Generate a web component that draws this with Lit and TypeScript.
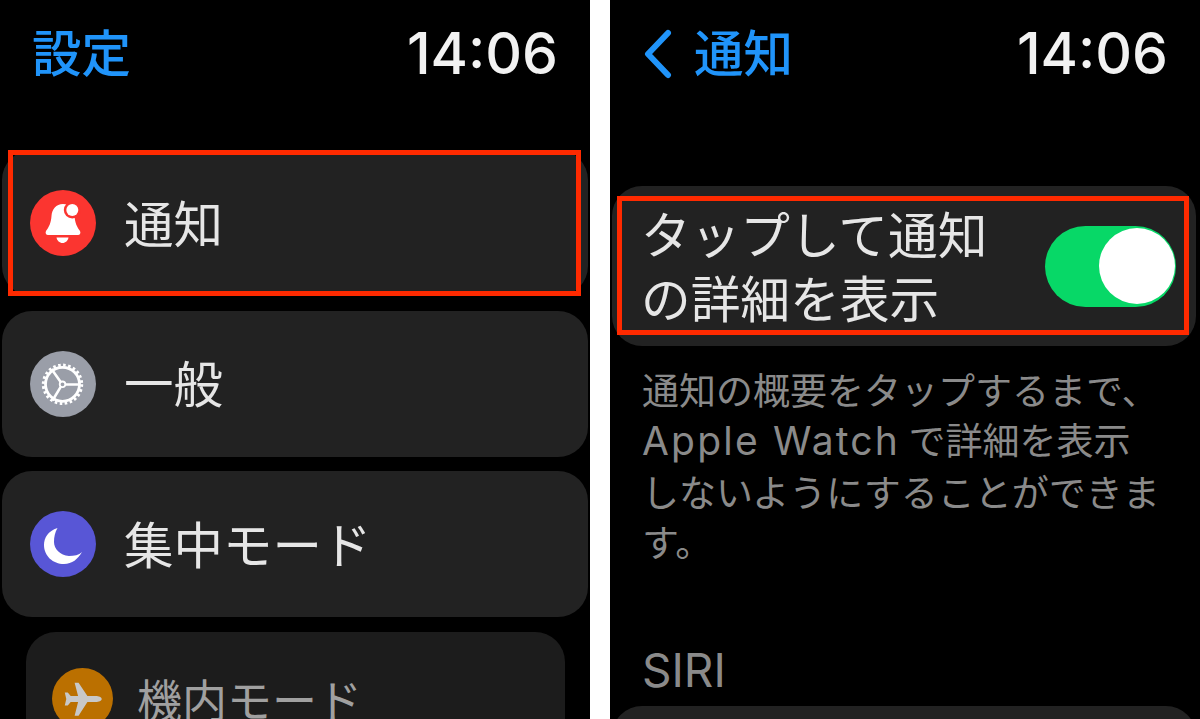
import { LitElement, html, css } from "lit";
import { customElement } from "lit/decorators.js";

const bell = html`<svg viewBox="0 0 66 66" class="ico"><circle cx="33" cy="33" r="33" fill="#fb3530"/>
<path d="M33 14C26 14 22 19 21.500 26 21 33 19 37 16 41 15 43 16 45 18 45H48C50 45 51 43 50 41 47 37 45 33 44.500 26 44 19 40 14 33 14z" fill="#fff"/>
<path d="M26.500 47.500h12c-.5 3-3 5.500-6 5.500s-5.500-2.500-6-5.500z" fill="#fff"/>
<circle cx="42.300" cy="20" r="8.500" fill="#fb3530"/><circle cx="42.300" cy="20" r="6" fill="#fff"/></svg>`;

const gear = html`<svg viewBox="0 0 66 66" class="ico"><circle cx="33" cy="33" r="33" fill="#9a9ea8"/>
<circle cx="32.500" cy="33.300" r="17" fill="none" stroke="#fff" stroke-width="2.800"/>
<circle cx="32.500" cy="33.300" r="19.200" fill="none" stroke="#fff" stroke-width="3" stroke-dasharray="2.600 2.430"/>
<path d="M30.700 31 21.500 18M35.500 33.500H49M30.700 35.800 22.500 49.500" fill="none" stroke="#fff" stroke-width="2.600"/>
<circle cx="32.500" cy="33.300" r="2.800" fill="#9a9ea8" stroke="#fff" stroke-width="1.800"/></svg>`;

const moon = html`<svg viewBox="0 0 66 66" class="ico"><circle cx="33" cy="33" r="33" fill="#5856d6"/>
<path d="M27.500 17C18 20 14 27 14 34 14 45 23 53 34 53 42 53 48 48 52 41 49 44 44 45 39 45 30 44 24 38 24 31 24 26 25 21 27.500 17z" fill="#fff"/></svg>`;

const plane = html`<svg viewBox="0 0 62 62" class="ico small"><circle cx="31" cy="31" r="31" fill="#bb7000"/>
<path d="M50.500 31.500c0-1.800-3-3-6-3H36L27 15h-4l3.500 13.500H19l-3-3.500h-3l1.500 6.500-1.500 6.500h3l3-3.500h7.500L23 48.500h4l9-14h8.500c3 0 6-1.200 6-3z" fill="#c8c8c8"/></svg>`;

@customElement("app-root")
export class AppRoot extends LitElement {
  static styles = css`
    :host {
      display: flex;
      width: 1200px;
      height: 719px;
      overflow: hidden;
      background: #000;
      font-family: "Noto Sans CJK JP", "Inter", sans-serif;
      color: #e6e6e6;
    }
    .left { width: 590px; padding: 0 2px; box-sizing: border-box; }
    .divider { width: 20px; background: #fff; flex: none; }
    .right { width: 590px; padding: 0 4px 0 2px; box-sizing: border-box; }
    .head {
      height: 102px;
      display: flex;
      align-items: center;
      justify-content: space-between;
      box-sizing: border-box;
      color: #2094fa;
      font-size: 49.500px;
      line-height: 60px;
      font-weight: 500;
    }
    .left .head { padding: 0 30px 0 30px; margin-bottom: 48px; }
    .right .head { padding: 0 28px 0 31px; margin-bottom: 84px; }
    .back { display: flex; align-items: center; gap: 21px; }
    .chev { width: 30px; height: 50px; margin-top: 6px; }
    .time { font-family: "Inter", sans-serif; font-size: 57px; font-weight: 500; color: #f2f2f2; margin-top: 6px; }
    .list { display: flex; flex-direction: column; gap: 14.500px; }
    .row {
      position: relative;
      height: 146px;
      background: #222;
      border-radius: 30px;
      display: flex;
      align-items: center;
      gap: 28px;
      padding: 0 0 0 28px;
      font-size: 49.500px;
      font-weight: 400;
      box-sizing: border-box;
    }
    .row > span { margin-top: -4px; }
    .row.sub {
      margin: 0 23px 0 24px;
      background: #1c1c1c;
      color: #a0a0a0;
      font-size: 45px;
      padding-left: 26px;
      gap: 24px;
      align-items: flex-start;
      padding-top: 36px;
      height: 88px;
      border-radius: 30px 30px 0 0;
    }
    .row.sub > span { line-height: 62px; margin-top: 0; }
    .ico { width: 66px; height: 66px; flex: none; }
    .ico.small { width: 61px; height: 61px; }
    .mark { position: absolute; border: 5px solid #ff2a00; box-sizing: border-box; pointer-events: none; }
    .mark.a { left: 6px; right: 7px; top: 0; bottom: 0; }
    .mark.b { left: 5px; right: 7px; top: 10px; bottom: 11px; }
    .card {
      position: relative;
      height: 160px;
      background: #222;
      border-radius: 30px;
      display: flex;
      align-items: center;
      justify-content: space-between;
      padding: 0 20px 0 29px;
      box-sizing: border-box;
      font-size: 49.700px;
      line-height: 64px;
      font-weight: 400;
    }
    .card span { margin-top: -4px; }
    .toggle {
      width: 131px;
      height: 81px;
      border-radius: 41px;
      background: #07d867;
      display: flex;
      align-items: center;
      justify-content: flex-end;
      padding-right: 1px;
      box-sizing: border-box;
      flex: none;
    }
    .knob { width: 76px; height: 76px; border-radius: 50%; background: #fff; }
    .desc {
      margin: 18px 0 0 30px;
      color: #8a8a8a;
      font-size: 37px;
      line-height: 50px;
      font-weight: 400;
      white-space: nowrap;
    }
    .desc .en { font-family: "Inter", sans-serif; font-size: 39px; font-weight: 400; letter-spacing: 2.200px; }
    .section {
      margin: 79px 0 0 30px;
      font-family: "Inter", sans-serif;
      color: #8a8a8a;
      font-size: 46px;
      line-height: 50px;
    }
    .bottom { margin-top: 11px; height: 60px; background: #222; border-radius: 30px; }
  `;

  render() {
    return html`
      <div class="left">
        <div class="head"><span>設定</span><span class="time">14:06</span></div>
        <div class="list">
          <div class="row">${bell}<span>通知</span><div class="mark a"></div></div>
          <div class="row">${gear}<span>一般</span></div>
          <div class="row">${moon}<span>集中モード</span></div>
          <div class="row sub">${plane}<span>機内モード</span></div>
        </div>
      </div>
      <div class="divider"></div>
      <div class="right">
        <div class="head">
          <span class="back">
            <svg class="chev" viewBox="0 0 30 50"><path d="M25 4 5 25l20 21" fill="none" stroke="#2094fa" stroke-width="6" stroke-linecap="round" stroke-linejoin="round"/></svg>
            <span>通知</span>
          </span>
          <span class="time">14:06</span>
        </div>
        <div class="card">
          <span>タップして通知<br />の詳細を表示</span>
          <div class="toggle"><div class="knob"></div></div>
          <div class="mark b"></div>
        </div>
        <div class="desc">通知の概要をタップするまで、<br /><span class="en">Apple Watch</span> で詳細を表示<br />しないようにすることができま<br />す。</div>
        <div class="section">SIRI</div>
        <div class="bottom"></div>
      </div>
    `;
  }
}
